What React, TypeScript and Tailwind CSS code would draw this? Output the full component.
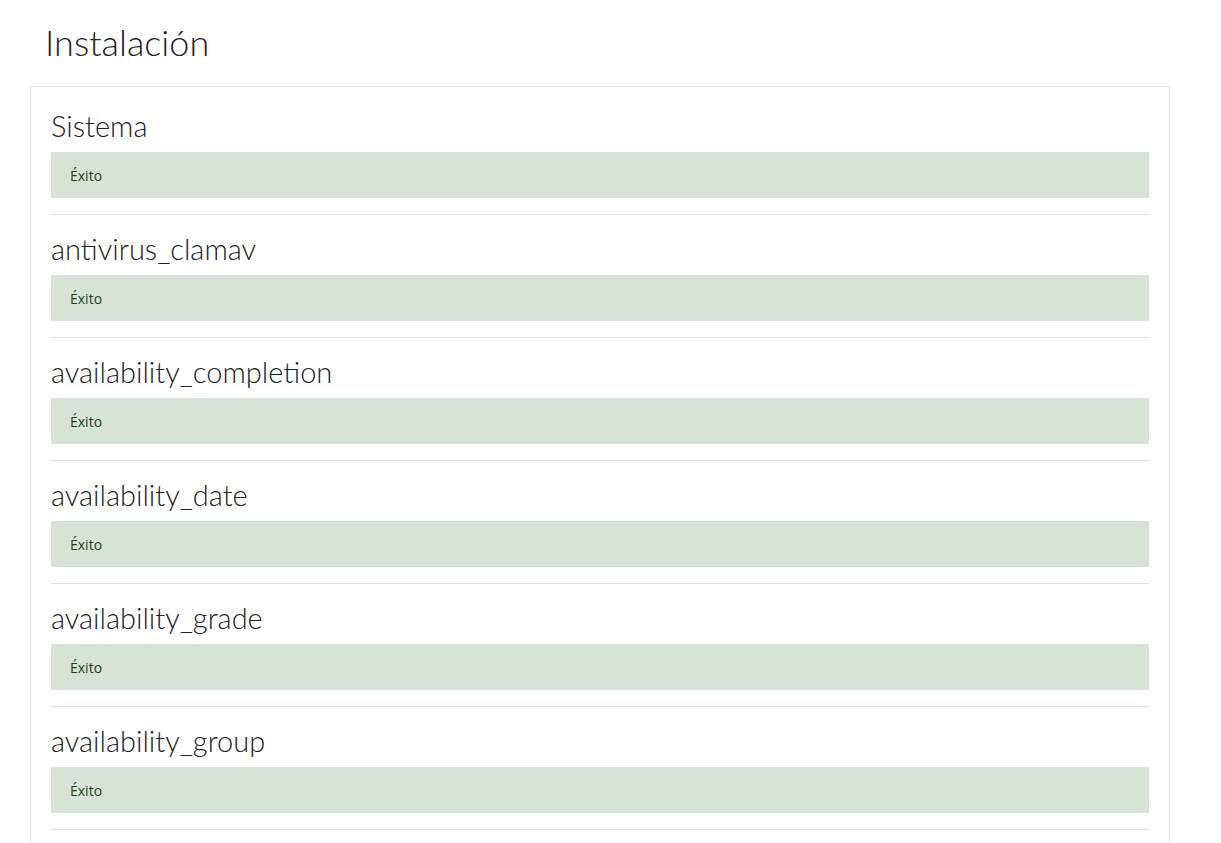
import React from 'react';

const plugins = [
  'Sistema',
  'antivirus_clamav',
  'availability_completion',
  'availability_date',
  'availability_grade',
  'availability_group',
];

const Section: React.FC<{ name: string; first?: boolean }> = ({ name, first }) => (
  <div>
    {!first && <hr className="my-4 border-t border-[#dee2e6]" />}
    <h3 className="font-['Lato',sans-serif] text-[29px] leading-[36px] font-light text-[#1d2125] mb-2">{name}</h3>
    <div className="h-[46px] flex items-center px-[19px] bg-[#d8e3d7] text-[14px] text-[#1c3f1a]">Éxito</div>
  </div>
);

export default function App() {
  return (
    <div className="h-[843px] overflow-hidden bg-white font-['Open_Sans',sans-serif]">
      <div className="px-[30px] pt-[16px] w-[1200px]">
        <h2 className="font-['Lato',sans-serif] text-[36px] leading-[52px] font-light text-[#1d2125] pl-[15px] mb-[18px]">Instalación</h2>
        <div className="border border-[#dee2e6] pt-[21px] px-[20px] pb-[40px] w-[1140px]">
          {plugins.map((p, i) => (
            <Section key={p} name={p} first={i === 0} />
          ))}
          <hr className="mt-4 border-t border-[#dee2e6]" />
        </div>
      </div>
    </div>
  );
}
